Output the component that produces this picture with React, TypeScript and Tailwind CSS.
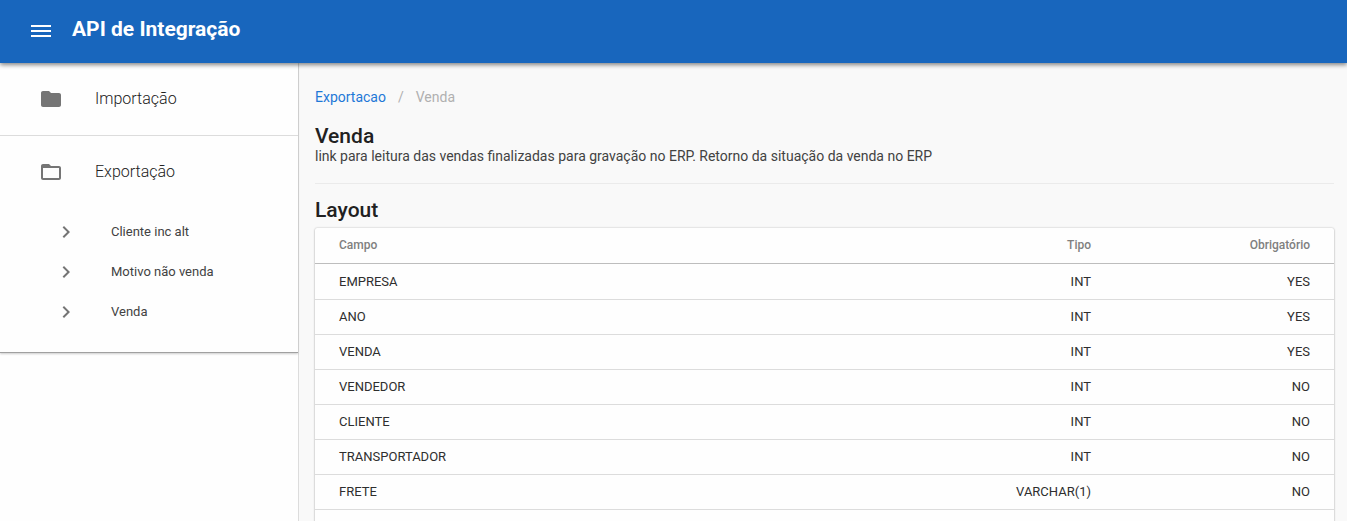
import { FC } from "react";
import { MdChevronRight, MdFolder, MdFolderOpen } from "react-icons/md";

interface Field {
  campo: string;
  tipo: string;
  obrigatorio: string;
}

const exportLinks = ["Cliente inc alt", "Motivo não venda", "Venda"];

const fields: Field[] = [
  { campo: "EMPRESA", tipo: "INT", obrigatorio: "YES" },
  { campo: "ANO", tipo: "INT", obrigatorio: "YES" },
  { campo: "VENDA", tipo: "INT", obrigatorio: "YES" },
  { campo: "VENDEDOR", tipo: "INT", obrigatorio: "NO" },
  { campo: "CLIENTE", tipo: "INT", obrigatorio: "NO" },
  { campo: "TRANSPORTADOR", tipo: "INT", obrigatorio: "NO" },
  { campo: "FRETE", tipo: "VARCHAR(1)", obrigatorio: "NO" },
];

const Header: FC = () => (
  <header className="relative z-10 flex h-[63px] items-center gap-[21px] bg-[#1866bd] pb-0.5 pl-[31px] text-white shadow-[0_2px_4px_rgba(0,0,0,0.35),0_1px_6px_rgba(0,0,0,0.2)]">
    <button type="button" aria-label="Menu">
      <svg width="20" height="12" viewBox="0 0 20 12" fill="currentColor">
        <path d="M0 0h20v2H0zM0 5h20v2H0zM0 10h20v2H0z" />
      </svg>
    </button>
    <h1 className="pb-1 text-[21px] leading-6 font-bold">
      API de Integração
    </h1>
  </header>
);

const Sidebar: FC = () => (
  <aside className="w-[299px] shrink-0 border-r border-[#dcdcdc] bg-[#fefefe]">
    <nav className="border-b border-[#a0a0a0] pb-5 shadow-[0_1px_2px_rgba(0,0,0,0.2)]">
      <button
        type="button"
        className="flex h-[73px] w-full items-center gap-8 border-b border-[#dcdcdc] pl-[39px] font-light"
      >
        <MdFolder size={24} className="text-[#757575]" />
        Importação
      </button>
      <button
        type="button"
        className="flex h-[72px] w-full items-center gap-8 pl-[39px] font-light"
      >
        <MdFolderOpen size={24} className="text-[#757575]" />
        Exportação
      </button>
      <ul className="pt-1">
        {exportLinks.map((label) => (
          <li key={label}>
            <a
              href="#"
              className="flex h-10 items-center gap-[33px] pl-[54px] text-[13px] text-[#424242]"
            >
              <MdChevronRight size={24} className="text-[#757575]" />
              {label}
            </a>
          </li>
        ))}
      </ul>
    </nav>
  </aside>
);

const FieldTable: FC = () => (
  <div className="rounded-xs bg-[#fefefe] shadow-[0_0_2px_rgba(0,0,0,0.25),0_1px_2px_rgba(0,0,0,0.2)]">
    <table className="w-full border-separate border-spacing-0 text-[13px] text-[#2e2e2e]">
      <thead>
        <tr className="h-9 text-xs text-[#808080] *:border-b *:border-[#bdbdbd] *:pb-0.5 *:font-medium">
          <th className="pl-6 text-left">Campo</th>
          <th className="pr-14 text-right">Tipo</th>
          <th className="w-[187px] pr-6 text-right">Obrigatório</th>
        </tr>
      </thead>
      <tbody>
        {fields.map((field) => (
          <tr
            key={field.campo}
            className="h-[35px] *:border-b *:border-[#dcdcdc] first:h-9"
          >
            <td className="pl-6">{field.campo}</td>
            <td className="pr-14 text-right">{field.tipo}</td>
            <td className="pr-6 text-right">{field.obrigatorio}</td>
          </tr>
        ))}
      </tbody>
    </table>
    <div className="h-9" />
  </div>
);

const App: FC = () => {
  return (
    <div className="flex h-screen flex-col overflow-hidden bg-[#f9f9f9] font-['Roboto',sans-serif] text-[#212121]">
      <Header />
      <div className="flex min-h-0 flex-1">
        <Sidebar />
        <main className="min-w-0 flex-1 overflow-hidden pt-6 pr-[13px] pl-4">
          <nav
            aria-label="breadcrumb"
            className="flex gap-3 text-sm text-[#b0b0b0]"
          >
            <a href="#" className="text-[#1e78d7]">
              Exportacao
            </a>
            <span>/</span>
            <span>Venda</span>
          </nav>

          <h2 className="mt-[17px] text-[21px] leading-6 font-medium">
            Venda
          </h2>
          <p className="text-sm leading-4 text-[#424242]">
            link para leitura das vendas finalizadas para gravação no ERP.
            Retorno da situação da venda no ERP
          </p>
          <hr className="mt-[19px] border-[#ebebeb]" />
          <h2 className="mt-[14px] mb-[6px] text-[21px] leading-6 font-medium">
            Layout
          </h2>
          <FieldTable />
        </main>
      </div>
    </div>
  );
};

export default App;
